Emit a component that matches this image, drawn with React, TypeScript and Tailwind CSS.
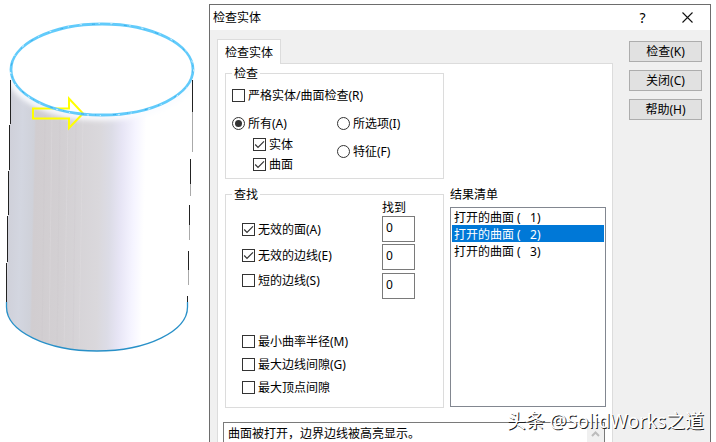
import { useState } from "react";

type CheckProps = { label: string; defaultChecked?: boolean; className?: string };

function Check({ label, defaultChecked, className = "" }: CheckProps) {
  return (
    <label className={`flex items-center gap-[3px] whitespace-nowrap ${className}`}>
      <span className="relative grid size-[13px] shrink-0">
        <input
          type="checkbox"
          defaultChecked={defaultChecked}
          className="peer size-[13px] appearance-none border border-[#333] bg-white"
        />
        <svg
          viewBox="0 0 13 13"
          className="pointer-events-none invisible absolute inset-0 size-[13px] peer-checked:visible"
          fill="none"
          stroke="#333"
          strokeWidth="1.2"
        >
          <path d="M2.200 6.500 5 9.300 11 3.300" />
        </svg>
      </span>
      <span>{label}</span>
    </label>
  );
}

function Radio({ label, defaultChecked, className = "" }: CheckProps) {
  return (
    <label className={`flex items-center gap-[3px] whitespace-nowrap ${className}`}>
      <span className="relative grid size-[13px] shrink-0">
        <input
          type="radio"
          name="scope"
          defaultChecked={defaultChecked}
          className="peer size-[13px] appearance-none rounded-full border border-[#333] bg-white"
        />
        <span className="pointer-events-none invisible absolute inset-[3px] rounded-full bg-[#333] peer-checked:visible" />
      </span>
      <span>{label}</span>
    </label>
  );
}

function Count({ label, className = "" }: { label: string; className?: string }) {
  return (
    <input
      type="text"
      readOnly
      aria-label={label}
      value="0"
      className={`block h-[26px] w-[33px] border border-[#7a7a7a] bg-white pb-[3px] pl-[3px] ${className}`}
    />
  );
}

function PushButton({ children }: { children: string }) {
  return (
    <button type="button" className="flex h-[21px] items-center justify-center border border-[#adadad] bg-[#e1e1e1]">
      {children}
    </button>
  );
}

function Cylinder() {
  return (
    <svg viewBox="0 0 209 442" className="h-[442px] w-[209px] shrink-0" fill="none" aria-hidden="true">
      <defs>
        <linearGradient id="side" gradientUnits="userSpaceOnUse" x1="8" y1="200" x2="190" y2="204">
          <stop offset="0" stopColor="#cfd0d9" />
          <stop offset="0.07" stopColor="#d3d6e0" />
          <stop offset="0.135" stopColor="#cfd1d9" />
          <stop offset="0.145" stopColor="#d1cdd0" />
          <stop offset="0.3" stopColor="#d3d0d3" />
          <stop offset="0.5" stopColor="#dad8dc" />
          <stop offset="0.56" stopColor="#dcdce6" />
          <stop offset="0.62" stopColor="#e7e5f5" />
          <stop offset="0.69" stopColor="#f5f4ff" />
          <stop offset="0.75" stopColor="#ffffff" />
        </linearGradient>
        <clipPath id="body">
          <path d="M11 70A91 45.5 0 0 0 193 70L187.500 307A90.500 44 0 0 1 6.500 307Z" />
        </clipPath>
        <filter id="soft" x="-20%" y="-20%" width="140%" height="140%">
          <feGaussianBlur stdDeviation="2.5" />
        </filter>
      </defs>
      <g clipPath="url(#body)">
        <path d="M0 60H209V360H0Z" fill="url(#side)" />
        <path d="M45 115 42 350M60 115 57 352M76 118 73 352" stroke="#c9c5ca" strokeOpacity=".2" />
        <path d="M52 115 49 350M68 118 64 352M83 118 79 352" stroke="#e4e2e5" strokeOpacity=".3" />
        <ellipse cx="102" cy="71" rx="93" ry="46" stroke="#fbfcff" strokeWidth="7" filter="url(#soft)" />
      </g>
      <path d="M10.500 80V124M9.500 125V170M8.500 171V215M7.500 216V262M6.500 263V308" stroke="#222" />
      <path d="M192.500 80V112M190.500 159V184M189.500 205V225M188.500 251V270M187.500 296V303" stroke="#222" />
      <path d="M192.500 112V152M190.500 184V196M189.500 225V240M188.500 270V285" stroke="#aaa" />
      <path d="M6.500 302V307A90.500 44 0 0 0 187.500 307V302" stroke="#2890c8" strokeWidth="1.3" />
      <path d="M33 108.500H69V98.500L83 113.500 69 128V118.500H33Z" stroke="#ffff00" strokeWidth="2" />
      <ellipse cx="102" cy="69.500" rx="91" ry="45.500" stroke="#62cbfb" strokeWidth="2.8" />
      <ellipse cx="102" cy="69.500" rx="91" ry="45.500" stroke="#2fa6e4" strokeWidth="0.8" strokeDasharray="3 17 1 11" />
      <ellipse cx="102" cy="69.500" rx="91.500" ry="46" stroke="#e8f8ff" strokeWidth="1" strokeDasharray="2 17 1 11" />
    </svg>
  );
}

const surfaces = [1, 2, 3];

export default function App() {
  const [selected, setSelected] = useState("2");

  return (
    <div className="relative flex h-screen overflow-hidden bg-white font-['Noto_Sans','Noto_Sans_CJK_SC',sans-serif] text-[12px] leading-[17px] text-black">
      <Cylinder />

      <section aria-label="检查实体" className="mt-1 mr-[5px] flex min-w-0 flex-1 flex-col border border-b-0 border-[#6d6d6d] bg-[#f0f0f0]">
        <header className="flex h-[25px] shrink-0 items-center bg-white pl-[3px]">
          <h1 className="flex-1">检查实体</h1>
          <button type="button" aria-label="帮助" className="w-[45px] text-center text-[14px]">
            ?
          </button>
          <button type="button" aria-label="关闭" className="grid w-[45px] place-items-center">
            <svg viewBox="0 0 11 11" className="size-[11px]" stroke="#111" strokeWidth="1.1">
              <path d="M.5.5l10 10M10.5.5l-10 10" />
            </svg>
          </button>
        </header>

        <div className="flex min-h-0 flex-1 gap-4 pr-2 pl-[7px]">
          <div className="flex min-w-0 flex-1 flex-col pt-[9px]">
            <div role="tablist" className="z-10 -mb-px flex">
              <button type="button" role="tab" aria-selected="true" className="h-[25px] w-16 border border-b-0 border-[#dcdcdc] bg-white">
                检查实体
              </button>
            </div>

            <div role="tabpanel" className="flex min-h-0 flex-1 flex-col border border-b-0 border-[#dcdcdc] bg-white pt-px pr-[6px] pl-[5px]">
              <div className="flex shrink-0 gap-[6px] pl-[2px]">
                <div className="flex flex-1 flex-col gap-[7px]">
                  <fieldset className="border border-[#dcdcdc] px-[6px] pb-[5px]">
                    <legend className="px-[2px]">检查</legend>
                    <Check label="严格实体/曲面检查(R)" className="mt-[5px]" />
                    <div className="mt-[11px] flex">
                      <div className="w-[105px]">
                        <Radio label="所有(A)" defaultChecked />
                        <Check label="实体" defaultChecked className="mt-1 pl-[21px]" />
                        <Check label="曲面" defaultChecked className="mt-[3px] pl-[21px]" />
                      </div>
                      <div>
                        <Radio label="所选项(I)" />
                        <Radio label="特征(F)" className="mt-[11px]" />
                      </div>
                    </div>
                  </fieldset>

                  <fieldset className="border border-[#dcdcdc] px-[6px] pb-[11px]">
                    <legend className="px-[2px]">查找</legend>
                    <div className="flex pl-[10px]">
                      <div className="w-[140px] pt-[18px]">
                        <Check label="无效的面(A)" defaultChecked />
                        <Check label="无效的边线(E)" defaultChecked className="mt-[9px]" />
                        <Check label="短的边线(S)" className="mt-2" />
                        <Check label="最小曲率半径(M)" className="mt-11" />
                        <Check label="最大边线间隙(G)" className="mt-[6px]" />
                        <Check label="最大顶点间隙" className="mt-[6px]" />
                      </div>
                      <div className="-mt-1">
                        <div>找到</div>
                        <Count label="找到 无效的面" />
                        <Count label="找到 无效的边线" className="mt-[2px]" />
                        <Count label="找到 短的边线" className="mt-[3px]" />
                      </div>
                    </div>
                  </fieldset>
                </div>

                <div className="flex w-[156px] flex-col justify-end pb-px">
                  <label htmlFor="results">结果清单</label>
                  <select
                    id="results"
                    size={11}
                    value={selected}
                    onChange={(e) => setSelected(e.target.value)}
                    className="mt-1 h-[200px] appearance-none overflow-hidden border border-[#828790] bg-white px-px"
                  >
                    {surfaces.map((n) => (
                      <option
                        key={n}
                        value={n}
                        className="h-[17px] min-h-0 p-0 pl-[2px] leading-[17px] whitespace-pre checked:bg-[#0078d7] checked:bg-linear-to-r checked:from-[#0078d7] checked:to-[#0078d7] checked:text-white"
                      >
                        {`打开的曲面 (\u00a0\u00a0\u00a0${n})`}
                      </option>
                    ))}
                  </select>
                </div>
              </div>

              <div className="mt-[14px] mr-px flex min-h-0 flex-1 border border-b-0 border-[#7a7a7a]">
                <textarea
                  readOnly
                  aria-label="说明"
                  value="曲面被打开，边界边线被高亮显示。"
                  className="min-w-0 flex-1 resize-none overflow-hidden pt-[2px] pl-1"
                />
                <div className="flex w-[17px] justify-center bg-[#f0f0f0] pt-2">
                  <svg viewBox="0 0 9 6" className="h-[6px] w-[9px]" fill="none" stroke="#bcbcbc" strokeWidth="2">
                    <path d="M1 5 4.500 1.500 8 5" />
                  </svg>
                </div>
              </div>
            </div>
          </div>

          <div className="flex w-[73px] flex-col gap-2 pt-[11px]">
            <PushButton>检查(K)</PushButton>
            <PushButton>关闭(C)</PushButton>
            <PushButton>帮助(H)</PushButton>
          </div>
        </div>
      </section>

      <div className="pointer-events-none absolute right-3 bottom-2 z-20 text-[19px] leading-[26px] whitespace-nowrap text-white [text-shadow:1px_1px_0_#222]">
        头条 @SolidWorks之道
      </div>
    </div>
  );
}
